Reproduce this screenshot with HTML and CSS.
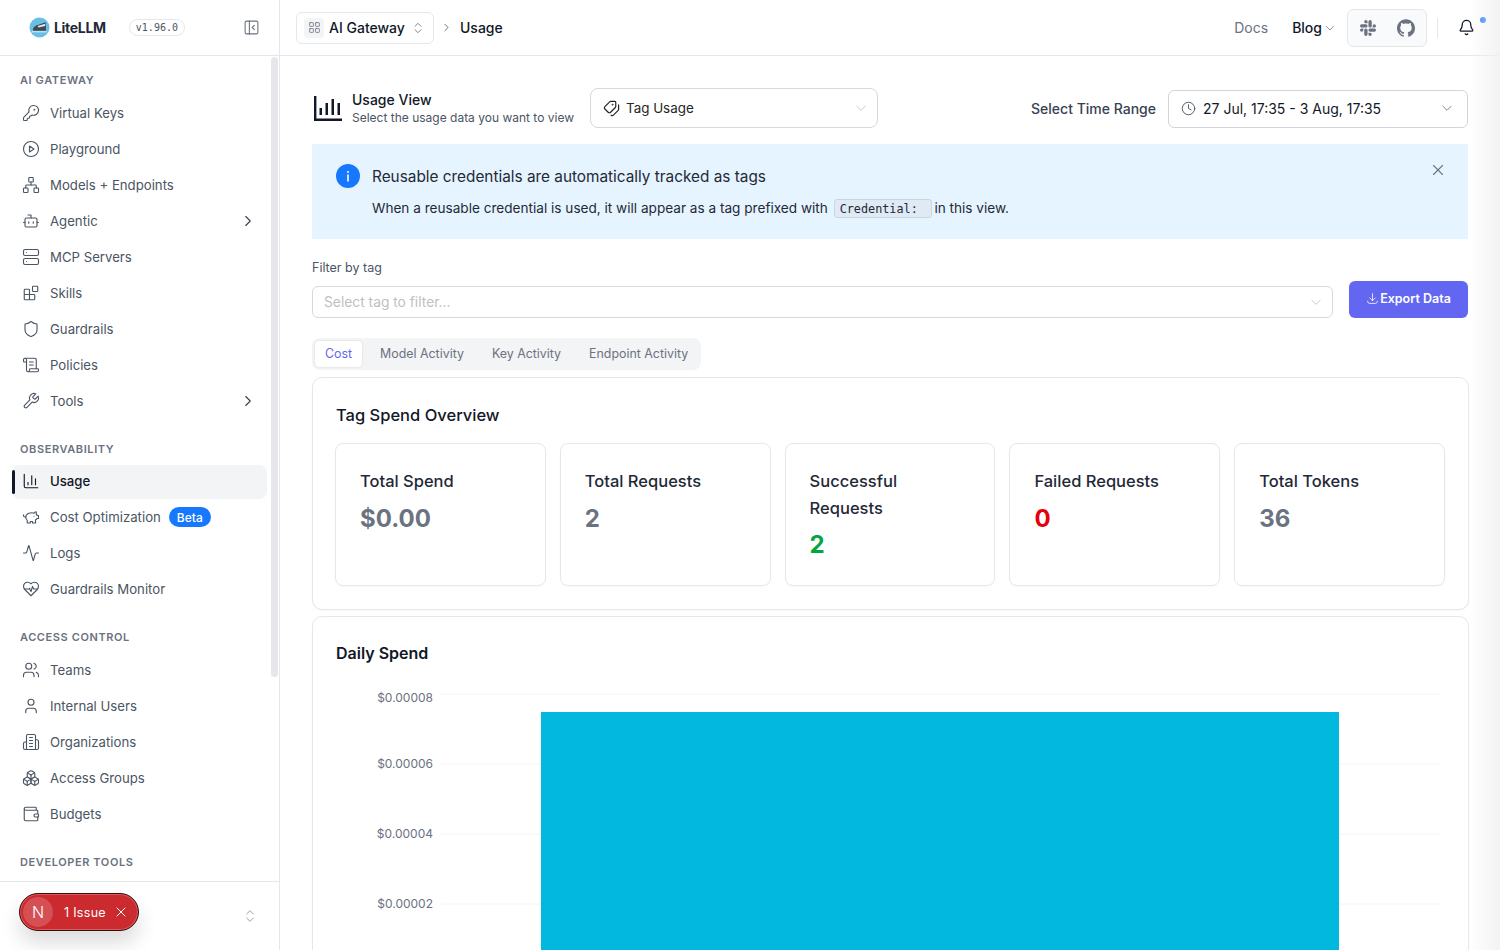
FILE: index.html
```html
<!DOCTYPE html>
<html lang="en">
<head>
  <meta charset="UTF-8" />
  <title>LiteLLM - Usage</title>
  <link rel="stylesheet" href="styles.css">
</head>
<body>
  <aside class="sidebar">
    <div class="brand">
      <svg class="brand-logo" viewBox="0 0 22 22">
        <circle cx="11" cy="11" r="10.5" fill="#68bfe6"/>
        <path d="M4 13c.5-2.5 3-4.5 6-5l7-2.5 .8 1.5v7.5H6c-1.2 0-2-.6-2-1.5z" fill="#3f4a55"/>
        <path d="M9 9.5l8-2.5v2.5l-7 1.5z" fill="#dfe8ee"/>
        <path d="M3 15.5h15.5" stroke="#e6eef2" stroke-width="1"/>
      </svg>
      <span class="brand-name">LiteLLM</span>
      <span class="version">v1.96.0</span>
      <svg class="icon collapse" viewBox="0 0 24 24"><rect x="3" y="3" width="18" height="18" rx="2"/><path d="M9 3v18"/><path d="m16 15-3-3 3-3"/></svg>
    </div>

    <nav class="nav">
      <div class="thumb"></div>
      <div class="nav-label">AI GATEWAY</div>
      <ul class="nav-list">
        <li class="nav-item"><svg class="icon" viewBox="0 0 24 24"><path d="M2.586 17.414A2 2 0 0 0 2 18.828V21a1 1 0 0 0 1 1h3a1 1 0 0 0 1-1v-1a1 1 0 0 1 1-1h1a1 1 0 0 0 1-1v-1a1 1 0 0 1 1-1h.172a2 2 0 0 0 1.414-.586l.814-.814a6.5 6.5 0 1 0-4-4z"/><circle cx="16.5" cy="7.5" r=".5"/></svg>Virtual Keys</li>
        <li class="nav-item"><svg class="icon" viewBox="0 0 24 24"><circle cx="12" cy="12" r="10"/><path d="M10 8l6 4-6 4z"/></svg>Playground</li>
        <li class="nav-item"><svg class="icon" viewBox="0 0 24 24"><rect x="16" y="16" width="6" height="6" rx="1"/><rect x="2" y="16" width="6" height="6" rx="1"/><rect x="9" y="2" width="6" height="6" rx="1"/><path d="M5 16v-3a1 1 0 0 1 1-1h12a1 1 0 0 1 1 1v3"/><path d="M12 12V8"/></svg>Models + Endpoints</li>
        <li class="nav-item"><svg class="icon" viewBox="0 0 24 24"><path d="M12 8V4H8"/><rect x="4" y="8" width="16" height="12" rx="2"/><path d="M2 14h2"/><path d="M20 14h2"/><path d="M15 13v2"/><path d="M9 13v2"/></svg>Agentic<svg class="icon arrow" viewBox="0 0 24 24"><path d="m9 18 6-6-6-6"/></svg></li>
        <li class="nav-item"><svg class="icon" viewBox="0 0 24 24"><rect x="2" y="2" width="20" height="8" rx="2"/><rect x="2" y="14" width="20" height="8" rx="2"/><path d="M6 6h.01"/><path d="M6 18h.01"/></svg>MCP Servers</li>
        <li class="nav-item"><svg class="icon" viewBox="0 0 24 24"><rect x="14" y="3" width="7" height="7" rx="1"/><path d="M10 21V8a1 1 0 0 0-1-1H4a1 1 0 0 0-1 1v12a1 1 0 0 0 1 1h12a1 1 0 0 0 1-1v-5a1 1 0 0 0-1-1H3"/></svg>Skills</li>
        <li class="nav-item"><svg class="icon" viewBox="0 0 24 24"><path d="M20 13c0 5-3.5 7.5-7.66 8.95a1 1 0 0 1-.67-.01C7.5 20.5 4 18 4 13V6a1 1 0 0 1 1-1c2 0 4.5-1.2 6.24-2.72a1.17 1.17 0 0 1 1.52 0C14.51 3.81 17 5 19 5a1 1 0 0 1 1 1z"/></svg>Guardrails</li>
        <li class="nav-item"><svg class="icon" viewBox="0 0 24 24"><path d="M15 12h-5"/><path d="M15 8h-5"/><path d="M19 17V5a2 2 0 0 0-2-2H4"/><path d="M8 21h12a2 2 0 0 0 2-2v-1a1 1 0 0 0-1-1H11a1 1 0 0 0-1 1v1a2 2 0 1 1-4 0V5a2 2 0 1 0-4 0v2a1 1 0 0 0 1 1h3"/></svg>Policies</li>
        <li class="nav-item"><svg class="icon" viewBox="0 0 24 24"><path d="M14.7 6.3a1 1 0 0 0 0 1.4l1.6 1.6a1 1 0 0 0 1.4 0l3.77-3.77a6 6 0 0 1-7.94 7.94l-6.91 6.91a2.12 2.12 0 0 1-3-3l6.91-6.91a6 6 0 0 1 7.94-7.94l-3.76 3.76z"/></svg>Tools<svg class="icon arrow" viewBox="0 0 24 24"><path d="m9 18 6-6-6-6"/></svg></li>
      </ul>

      <div class="nav-label">OBSERVABILITY</div>
      <ul class="nav-list">
        <li class="nav-item active"><svg class="icon" viewBox="0 0 24 24"><path d="M3 3v16a2 2 0 0 0 2 2h16"/><path d="M18 17V9"/><path d="M13 17V5"/><path d="M8 17v-3"/></svg>Usage</li>
        <li class="nav-item"><svg class="icon" viewBox="0 0 24 24"><path d="M19 5c-1.5 0-2.8 1.4-3 2-3.5-1.5-11-.3-11 5 0 1.8 0 3 2 4.5V20h4v-2h3v2h4v-4c1-.5 1.7-1 2-2h2v-4h-2c0-1-.5-1.5-1-2V5z"/><path d="M2 9v1c0 1.1.9 2 2 2h1"/><path d="M16 11h.01"/></svg>Cost Optimization<span class="beta">Beta</span></li>
        <li class="nav-item"><svg class="icon" viewBox="0 0 24 24"><path d="M22 12h-2.48a2 2 0 0 0-1.93 1.46l-2.35 8.36a.25.25 0 0 1-.48 0L9.24 2.18a.25.25 0 0 0-.48 0l-2.35 8.36A2 2 0 0 1 4.49 12H2"/></svg>Logs</li>
        <li class="nav-item"><svg class="icon" viewBox="0 0 24 24"><path d="M19 14c1.49-1.46 3-3.21 3-5.5A5.5 5.5 0 0 0 16.5 3c-1.76 0-3 .5-4.5 2-1.5-1.5-2.74-2-4.5-2A5.5 5.5 0 0 0 2 8.5c0 2.3 1.5 4.05 3 5.5l7 7Z"/><path d="M3.22 12H9.5l.5-1 2 4.5 2-7 1.5 3.5h5.27"/></svg>Guardrails Monitor</li>
      </ul>

      <div class="nav-label">ACCESS CONTROL</div>
      <ul class="nav-list">
        <li class="nav-item"><svg class="icon" viewBox="0 0 24 24"><path d="M16 21v-2a4 4 0 0 0-4-4H6a4 4 0 0 0-4 4v2"/><circle cx="9" cy="7" r="4"/><path d="M22 21v-2a4 4 0 0 0-3-3.87"/><path d="M16 3.13a4 4 0 0 1 0 7.75"/></svg>Teams</li>
        <li class="nav-item"><svg class="icon" viewBox="0 0 24 24"><path d="M19 21v-2a4 4 0 0 0-4-4H9a4 4 0 0 0-4 4v2"/><circle cx="12" cy="7" r="4"/></svg>Internal Users</li>
        <li class="nav-item"><svg class="icon" viewBox="0 0 24 24"><path d="M6 22V4a2 2 0 0 1 2-2h8a2 2 0 0 1 2 2v18Z"/><path d="M6 12H4a2 2 0 0 0-2 2v6a2 2 0 0 0 2 2h2"/><path d="M18 9h2a2 2 0 0 1 2 2v9a2 2 0 0 1-2 2h-2"/><path d="M10 6h4"/><path d="M10 10h4"/><path d="M10 14h4"/><path d="M10 18h4"/></svg>Organizations</li>
        <li class="nav-item"><svg class="icon" viewBox="0 0 24 24"><path d="M2.97 12.92A2 2 0 0 0 2 14.63v3.24a2 2 0 0 0 .97 1.71l3 1.8a2 2 0 0 0 2.06 0L12 19v-5.5l-5-3-4.03 2.42Z"/><path d="m7 16.5-4.74-2.85"/><path d="m7 16.5 5-3"/><path d="M7 16.5v5.17"/><path d="M12 13.5V19l3.97 2.38a2 2 0 0 0 2.06 0l3-1.8a2 2 0 0 0 .97-1.71v-3.24a2 2 0 0 0-.97-1.71L17 10.5l-5 3Z"/><path d="m17 16.5-5-3"/><path d="m17 16.5 4.74-2.85"/><path d="M17 16.5v5.17"/><path d="M7.97 4.42A2 2 0 0 0 7 6.13v4.37l5 3 5-3V6.13a2 2 0 0 0-.97-1.71l-3-1.8a2 2 0 0 0-2.06 0l-3 1.8Z"/><path d="M12 8 7.26 5.15"/><path d="m12 8 4.74-2.85"/><path d="M12 13.5V8"/></svg>Access Groups</li>
        <li class="nav-item"><svg class="icon" viewBox="0 0 24 24"><path d="M19 7V4a1 1 0 0 0-1-1H5a2 2 0 0 0 0 4h15a1 1 0 0 1 1 1v4h-3a2 2 0 0 0 0 4h3a1 1 0 0 0 1-1v-2a1 1 0 0 0-1-1"/><path d="M3 5v14a2 2 0 0 0 2 2h15a1 1 0 0 0 1-1v-4"/></svg>Budgets</li>
      </ul>

      <div class="nav-label">DEVELOPER TOOLS</div>
    </nav>

    <div class="side-foot">
      <div class="issue-toast">
        <span class="issue-n">N</span>
        <span class="issue-text">1 Issue</span>
        <svg class="icon issue-x" viewBox="0 0 24 24"><path d="M18 6 6 18"/><path d="m6 6 12 12"/></svg>
      </div>
      <svg class="icon updown" viewBox="0 0 24 24"><path d="m7 15 5 5 5-5"/><path d="m7 9 5-5 5 5"/></svg>
    </div>
  </aside>

  <div class="page">
    <header class="topbar">
      <div class="gateway">
        <span class="gateway-icon"><svg class="icon" viewBox="0 0 24 24"><rect x="3" y="3" width="7" height="7" rx="1"/><rect x="14" y="3" width="7" height="7" rx="1"/><rect x="14" y="14" width="7" height="7" rx="1"/><rect x="3" y="14" width="7" height="7" rx="1"/></svg></span>
        AI Gateway
        <svg class="icon updown" viewBox="0 0 24 24"><path d="m7 15 5 5 5-5"/><path d="m7 9 5-5 5 5"/></svg>
      </div>
      <svg class="icon crumb-sep" viewBox="0 0 24 24"><path d="m9 18 6-6-6-6"/></svg>
      <span class="crumb">Usage</span>
      <div class="top-right">
        <span class="top-link">Docs</span>
        <span class="top-link blog">Blog<svg class="icon" viewBox="0 0 24 24"><path d="m5 9 7 7 7-7"/></svg></span>
        <div class="social">
          <svg class="slack" viewBox="0 0 24 24"><path d="M5.042 15.165a2.528 2.528 0 0 1-2.52 2.523A2.528 2.528 0 0 1 0 15.165a2.527 2.527 0 0 1 2.522-2.52h2.52v2.52zM6.313 15.165a2.527 2.527 0 0 1 2.521-2.52 2.527 2.527 0 0 1 2.521 2.52v6.313A2.528 2.528 0 0 1 8.834 24a2.528 2.528 0 0 1-2.521-2.522v-6.313zM8.834 5.042a2.528 2.528 0 0 1-2.521-2.52A2.528 2.528 0 0 1 8.834 0a2.528 2.528 0 0 1 2.521 2.522v2.52H8.834zM8.834 6.313a2.528 2.528 0 0 1 2.521 2.521 2.528 2.528 0 0 1-2.521 2.521H2.522A2.528 2.528 0 0 1 0 8.834a2.528 2.528 0 0 1 2.522-2.521h6.312zM18.956 8.834a2.528 2.528 0 0 1 2.522-2.521A2.528 2.528 0 0 1 24 8.834a2.528 2.528 0 0 1-2.522 2.521h-2.522V8.834zM17.688 8.834a2.528 2.528 0 0 1-2.523 2.521 2.527 2.527 0 0 1-2.52-2.521V2.522A2.527 2.527 0 0 1 15.165 0a2.528 2.528 0 0 1 2.523 2.522v6.312zM15.165 18.956a2.528 2.528 0 0 1 2.523 2.522A2.528 2.528 0 0 1 15.165 24a2.527 2.527 0 0 1-2.52-2.522v-2.522h2.52zM15.165 17.688a2.527 2.527 0 0 1-2.52-2.523 2.526 2.526 0 0 1 2.52-2.52h6.313A2.527 2.527 0 0 1 24 15.165a2.528 2.528 0 0 1-2.522 2.523h-6.313z"/></svg>
          <svg class="github" viewBox="0 0 24 24"><path d="M12 .297c-6.63 0-12 5.373-12 12 0 5.303 3.438 9.8 8.205 11.385.6.113.82-.258.82-.577 0-.285-.01-1.04-.015-2.04-3.338.724-4.042-1.61-4.042-1.61C4.422 18.07 3.633 17.7 3.633 17.7c-1.087-.744.084-.729.084-.729 1.205.084 1.838 1.236 1.838 1.236 1.07 1.835 2.809 1.305 3.495.998.108-.776.417-1.305.76-1.605-2.665-.3-5.466-1.332-5.466-5.93 0-1.31.465-2.38 1.235-3.22-.135-.303-.54-1.523.105-3.176 0 0 1.005-.322 3.3 1.23.96-.267 1.98-.399 3-.405 1.02.006 2.04.138 3 .405 2.28-1.552 3.285-1.23 3.285-1.23.645 1.653.24 2.873.12 3.176.765.84 1.23 1.91 1.23 3.22 0 4.61-2.805 5.625-5.475 5.92.42.36.81 1.096.81 2.22 0 1.606-.015 2.896-.015 3.286 0 .315.21.69.825.57C20.565 22.092 24 17.592 24 12.297c0-6.627-5.373-12-12-12"/></svg>
        </div>
        <span class="top-divider"></span>
        <span class="bell">
          <svg class="icon" viewBox="0 0 24 24"><path d="M10.268 21a2 2 0 0 0 3.464 0"/><path d="M3.262 15.326A1 1 0 0 0 4 17h16a1 1 0 0 0 .74-1.673C19.41 13.956 18 12.499 18 8A6 6 0 0 0 6 8c0 4.499-1.411 5.956-2.738 7.326"/></svg>
          <span class="bell-dot"></span>
        </span>
      </div>
    </header>

    <main class="content">
      <div class="view-row">
        <svg class="view-icon" viewBox="0 0 28 25"><path d="M1.2 0v23.8H28" fill="none" stroke="#111827" stroke-width="2.4"/><path d="M5.5 19H8v-7H5.5zM11.5 19H14V7h-2.5zM17.5 19H20V3h-2.5zM23.5 19H26V7h-2.5z" fill="#111827"/></svg>
        <div class="view-text">
          <div class="view-title">Usage View</div>
          <div class="view-sub">Select the usage data you want to view</div>
        </div>
        <div class="view-select">
          <svg class="icon tags" viewBox="0 0 24 24"><path d="M13.172 2a2 2 0 0 1 1.414.586l6.71 6.71a2.4 2.4 0 0 1 0 3.408l-4.592 4.592a2.4 2.4 0 0 1-3.408 0l-6.71-6.71A2 2 0 0 1 6 9.172V3a1 1 0 0 1 1-1z"/><path d="M2 7v6.172a2 2 0 0 0 .586 1.414l6.71 6.71a2.4 2.4 0 0 0 3.18.188"/><circle cx="10.5" cy="6.5" r=".5"/></svg>
          Tag Usage
          <svg class="icon chev" viewBox="0 0 24 24"><path d="m5 9 7 7 7-7"/></svg>
        </div>
        <div class="range">
          <span class="range-label">Select Time Range</span>
          <div class="range-picker">
            <svg class="icon" viewBox="0 0 24 24"><circle cx="12" cy="12" r="10"/><path d="M12 6v6l4 2"/></svg>
            27 Jul, 17:35 - 3 Aug, 17:35
            <svg class="icon chev" viewBox="0 0 24 24"><path d="m5 9 7 7 7-7"/></svg>
          </div>
        </div>
      </div>

      <div class="alert">
        <svg class="alert-icon" viewBox="0 0 24 24"><circle cx="12" cy="12" r="12" fill="#1677ff"/><rect x="11.2" y="10.5" width="1.6" height="7" fill="#fff"/><rect x="11.2" y="7" width="1.6" height="1.8" fill="#fff"/></svg>
        <div class="alert-body">
          <div class="alert-title">Reusable credentials are automatically tracked as tags</div>
          <div class="alert-text">When a reusable credential is used, it will appear as a tag prefixed with <code>Credential:</code> in this view.</div>
        </div>
        <svg class="icon alert-close" viewBox="0 0 24 24"><path d="M18 6 6 18"/><path d="m6 6 12 12"/></svg>
      </div>

      <div class="filter">
        <div class="filter-main">
          <div class="filter-label">Filter by tag</div>
          <div class="filter-select">Select tag to filter...<svg class="icon chev" viewBox="0 0 24 24"><path d="m5 9 7 7 7-7"/></svg></div>
        </div>
        <button class="export"><svg class="icon" viewBox="0 0 24 24"><path d="M12 3v13"/><path d="m7 11 5 5 5-5"/><path d="M3 17c0 2.5 1.5 4 4 4h10c2.5 0 4-1.5 4-4"/></svg>Export Data</button>
      </div>

      <div class="tabs">
        <span class="tab current">Cost</span>
        <span class="tab">Model Activity</span>
        <span class="tab">Key Activity</span>
        <span class="tab">Endpoint Activity</span>
      </div>

      <section class="card overview">
        <h2 class="card-title">Tag Spend Overview</h2>
        <div class="stats">
          <div class="stat"><div class="stat-label">Total Spend</div><div class="stat-value">$0.00</div></div>
          <div class="stat"><div class="stat-label">Total Requests</div><div class="stat-value">2</div></div>
          <div class="stat"><div class="stat-label">Successful Requests</div><div class="stat-value good">2</div></div>
          <div class="stat"><div class="stat-label">Failed Requests</div><div class="stat-value bad">0</div></div>
          <div class="stat"><div class="stat-label">Total Tokens</div><div class="stat-value">36</div></div>
        </div>
      </section>

      <section class="card daily">
        <h2 class="card-title strong">Daily Spend</h2>
        <svg class="chart" viewBox="0 0 1108 320">
          <g class="grid">
            <path d="M105 18H1104"/><path d="M105 88H1104"/><path d="M105 158H1104"/><path d="M105 228H1104"/>
          </g>
          <g class="ticks">
            <text x="97" y="26">$0.00008</text>
            <text x="97" y="92">$0.00006</text>
            <text x="97" y="162">$0.00004</text>
            <text x="97" y="232">$0.00002</text>
          </g>
          <rect x="205" y="36" width="798" height="284" fill="#02b8de"/>
        </svg>
      </section>
    </main>
  </div>

  <div class="edge-fade"></div>
</body>
</html>
```

FILE: styles.css
```css
* {
  box-sizing: border-box;
  margin: 0;
  padding: 0;
}

html, body {
  height: 100%;
}

body {
  display: flex;
  overflow: hidden;
  font-family: Inter, "Noto Sans", sans-serif;
  font-size: 14px;
  color: #111827;
  background: #fff;
}

.icon {
  width: 18px;
  height: 18px;
  flex: none;
  fill: none;
  stroke: currentColor;
  stroke-width: 1.5;
  stroke-linecap: round;
  stroke-linejoin: round;
}

/* sidebar */
.sidebar {
  width: 280px;
  flex: none;
  height: 100%;
  display: flex;
  flex-direction: column;
  border-right: 1px solid #e5e7eb;
}

.brand {
  height: 56px;
  flex: none;
  display: flex;
  align-items: center;
  padding-left: 29px;
  border-bottom: 1px solid #e5e7eb;
}

.brand-logo {
  width: 21px;
  height: 21px;
  flex: none;
}

.brand-name {
  margin-left: 4px;
  font-size: 14px;
  font-weight: 700;
  letter-spacing: -0.3px;
  color: #1f2937;
}

.version {
  margin-left: 23px;
  height: 17px;
  padding: 0 6px;
  display: flex;
  align-items: center;
  border: 1px solid #e5e7eb;
  border-radius: 9px;
  font-family: "DejaVu Sans Mono", monospace;
  font-size: 10px;
  color: #4b5563;
}

.collapse {
  margin-left: 58px;
  width: 17px;
  height: 17px;
  color: #6b7280;
}

.nav {
  position: relative;
  flex: 1;
  min-height: 0;
  overflow: hidden;
  padding: 16px 12px 0;
}

.thumb {
  position: absolute;
  top: 1px;
  right: 1px;
  width: 7px;
  height: 620px;
  border-radius: 4px;
  background: #e5e7eb;
}

.nav-label {
  height: 16px;
  padding-left: 8px;
  margin-bottom: 7.5px;
  font-size: 11px;
  line-height: 16px;
  font-weight: 600;
  letter-spacing: 0.6px;
  color: #6b7280;
}

.nav-list {
  list-style: none;
  display: flex;
  flex-direction: column;
  gap: 2px;
  margin-bottom: 23px;
  width: 255px;
}

.nav-item {
  height: 34px;
  display: flex;
  align-items: center;
  gap: 10px;
  padding-left: 10px;
  padding-right: 10px;
  border-radius: 8px;
  font-size: 13.2px;
  color: #4b5563;
}

.nav-item .arrow {
  margin-left: auto;
  color: #374151;
}

.nav-item.active {
  position: relative;
  margin-top: 1px;
  margin-bottom: -1px;
  padding-bottom: 2px;
  background: #f3f4f6;
  color: #111827;
  font-weight: 500;
}

.nav-item.active::before {
  content: "";
  position: absolute;
  left: 0;
  top: 5px;
  bottom: 5px;
  width: 3px;
  border-radius: 2px;
  background: #111827;
}

.beta {
  margin-left: -2px;
  height: 20px;
  padding: 0 8px;
  display: flex;
  align-items: center;
  border-radius: 10px;
  background: #1677ff;
  color: #fff;
  font-size: 12px;
  font-weight: 500;
}

.side-foot {
  position: relative;
  height: 69px;
  flex: none;
  display: flex;
  align-items: center;
  justify-content: flex-end;
  padding-right: 21px;
  border-top: 1px solid #e5e7eb;
}

.side-foot .updown {
  width: 16px;
  height: 16px;
  color: #9ca3af;
}

.issue-toast {
  position: absolute;
  left: 19px;
  top: 11px;
  width: 120px;
  height: 38px;
  display: flex;
  align-items: center;
  padding-left: 3px;
  border-radius: 19px;
  background: #cb2a2f;
  border: 1px solid #2b1214;
  box-shadow: inset 0 0 0 1px #e4565a, 0 12px 20px rgba(0, 0, 0, 0.14);
  color: #fff;
}

.issue-n {
  width: 30px;
  height: 30px;
  display: flex;
  align-items: center;
  justify-content: center;
  border-radius: 50%;
  background: rgba(255, 255, 255, 0.18);
  font-size: 16px;
  font-weight: 300;
}

.issue-text {
  margin-left: 11px;
  font-size: 12.5px;
  font-weight: 400;
  letter-spacing: 0.3px;
}

.issue-x {
  width: 16px;
  height: 16px;
  margin-left: 7px;
}

/* top bar */
.page {
  flex: 1;
  min-width: 0;
  height: 100%;
  display: flex;
  flex-direction: column;
}

.topbar {
  height: 56px;
  flex: none;
  display: flex;
  align-items: center;
  padding-left: 16px;
  border-bottom: 1px solid #e5e7eb;
}

.gateway {
  width: 138px;
  height: 32px;
  display: flex;
  align-items: center;
  padding-left: 7px;
  border: 1px solid #e5e7eb;
  border-radius: 6px;
  font-size: 14px;
  font-weight: 500;
  white-space: nowrap;
}

.gateway-icon {
  width: 20px;
  height: 20px;
  margin-right: 5px;
  display: flex;
  align-items: center;
  justify-content: center;
  border-radius: 4px;
  background: #f3f4f6;
  color: #6b7280;
}

.gateway-icon .icon {
  width: 13px;
  height: 13px;
}

.gateway .updown {
  width: 14px;
  height: 14px;
  margin-left: 6px;
  color: #6b7280;
}

.crumb-sep {
  width: 13px;
  height: 13px;
  margin: 0 7px 0 6px;
  color: #4b5563;
}

.crumb {
  font-size: 14px;
  font-weight: 500;
}

.top-right {
  margin-left: auto;
  display: flex;
  align-items: center;
  padding-right: 25px;
}

.top-link {
  font-size: 14px;
  color: #6b7280;
}

.blog {
  margin-left: 24px;
  display: flex;
  align-items: center;
  color: #111827;
  font-weight: 500;
}

.blog .icon {
  width: 12px;
  height: 12px;
  margin-left: 2px;
  color: #6b7280;
}

.social {
  width: 80px;
  height: 38px;
  margin-left: 11px;
  display: flex;
  align-items: center;
  gap: 21px;
  padding-left: 12px;
  border: 1px solid #e5e7eb;
  border-radius: 6px;
  background: #f9fafb;
  fill: #6b7280;
}

.slack {
  width: 16px;
  height: 16px;
}

.github {
  width: 18px;
  height: 18px;
}

.top-divider {
  width: 1px;
  height: 20px;
  margin: 0 20px 0 10px;
  background: #e5e7eb;
}

.bell {
  position: relative;
  display: flex;
  color: #111827;
}

.bell .icon {
  width: 17px;
  height: 17px;
  stroke-width: 1.8;
}

.bell-dot {
  position: absolute;
  top: -2px;
  right: -11px;
  width: 6px;
  height: 6px;
  border-radius: 50%;
  background: #1677ff;
}

/* page content */
.content {
  flex: 1;
  min-height: 0;
  overflow: hidden;
  padding: 32px 32px 0;
}

.view-row {
  height: 40px;
  display: flex;
  align-items: center;
  margin-bottom: 16px;
}

.view-icon {
  width: 28px;
  height: 25px;
  margin-left: 2px;
  flex: none;
}

.view-text {
  margin-left: 10px;
  width: 238px;
  flex: none;
  padding-bottom: 2px;
}

.view-title {
  font-size: 14px;
  line-height: 20px;
  font-weight: 500;
}

.view-sub {
  font-size: 12px;
  line-height: 15px;
  color: #4b5563;
  white-space: nowrap;
}

.view-select {
  width: 288px;
  height: 40px;
  display: flex;
  align-items: center;
  gap: 6px;
  padding: 0 9px 0 12px;
  border: 1px solid #d9d9d9;
  border-radius: 8px;
  font-size: 13.4px;
  color: #262626;
}

.tags {
  width: 17px;
  height: 17px;
  stroke-width: 1.7;
  transform: scaleX(-1);
}

.chev {
  margin-left: auto;
  width: 14px;
  height: 14px;
  color: #bfbfbf;
}

.range {
  margin-left: auto;
  display: flex;
  align-items: center;
  gap: 12px;
  align-self: flex-end;
}

.range-label {
  padding-bottom: 2px;
  color: #374151;
  font-weight: 500;
}

.range-picker {
  width: 300px;
  height: 38px;
  display: flex;
  align-items: center;
  gap: 7px;
  padding: 0 13px 2px 12px;
  border: 1px solid #d1d5db;
  border-radius: 6px;
  color: #111827;
}

.range-picker > .icon:first-child {
  width: 15px;
  height: 15px;
  color: #4b5563;
}

.range-picker .chev {
  color: #6b7280;
}

.alert {
  height: 95px;
  display: flex;
  gap: 12px;
  padding: 20px 24px;
  background: #e6f4ff;
}

.alert-icon {
  width: 24px;
  height: 24px;
  flex: none;
}

.alert-body {
  flex: 1;
}

.alert-title {
  padding-top: 1px;
  font-size: 15.35px;
  line-height: 24px;
  color: #1f2937;
}

.alert-text {
  margin-top: 9px;
  font-size: 13.6px;
  line-height: 20px;
  color: #1f2937;
}

.alert-text code {
  display: inline-block;
  width: 98px;
  height: 19px;
  padding-left: 5px;
  margin: 0 -1px 0 2px;
  border: 1px solid #cbd5e1;
  border-radius: 3px;
  background: #dfeaf4;
  font-family: "DejaVu Sans Mono", monospace;
  font-size: 11.8px;
  line-height: 18px;
}

.alert-close {
  margin-top: -3px;
  margin-right: -3px;
  color: #6b7280;
}

.filter {
  margin-top: 21px;
  display: flex;
  align-items: flex-end;
  gap: 16px;
}

.filter-main {
  flex: 1;
}

.filter-label {
  font-size: 12.5px;
  line-height: 16px;
  margin-bottom: 10px;
  color: #4b5563;
}

.filter-select {
  height: 32px;
  display: flex;
  align-items: center;
  padding: 0 9px 0 11px;
  border: 1px solid #d9d9d9;
  border-radius: 6px;
  font-size: 13.8px;
  color: #bfbfbf;
}

.export {
  width: 119px;
  height: 37px;
  display: flex;
  align-items: center;
  justify-content: center;
  gap: 1px;
  padding-bottom: 2px;
  border: none;
  border-radius: 6px;
  background: #6366f1;
  color: #fff;
  font-family: inherit;
  font-size: 12.5px;
  font-weight: 600;
}

.export .icon {
  width: 13px;
  height: 13px;
}

.tabs {
  width: 389px;
  height: 32px;
  margin-top: 20px;
  display: flex;
  align-items: center;
  padding: 0 3px 2px;
  border-radius: 8px;
  background: #f3f4f6;
}

.tab {
  padding: 0 14px;
  font-size: 12.4px;
  color: #6b7280;
  white-space: nowrap;
}

.tab.current {
  height: 26px;
  padding: 0 10px;
  margin-top: 2px;
  margin-right: 4px;
  padding-bottom: 2px;
  display: flex;
  align-items: center;
  border-radius: 4px;
  background: #fff;
  box-shadow: 0 0 2px rgba(0, 0, 0, 0.15);
  color: #6366f1;
}

.card {
  margin-right: -0.5px;
  border: 1px solid #e5e7eb;
  border-radius: 10px;
  padding: 23px;
  background: #fff;
  box-shadow: 0 1px 2px rgba(0, 0, 0, 0.03);
}

.overview {
  margin-top: 7px;
  height: 233px;
}

.daily {
  margin-top: 6px;
  padding-bottom: 0;
}

.card-title {
  font-size: 16.5px;
  line-height: 28px;
  font-weight: 500;
}

.card-title.strong {
  font-size: 16px;
  line-height: 26px;
  font-weight: 600;
}

.stats {
  margin: 14px -0.5px 0 -1px;
  display: grid;
  grid-template-columns: repeat(5, 1fr);
  gap: 14px;
}

.stat {
  height: 143px;
  padding: 24px;
  border: 1px solid #e5e7eb;
  border-radius: 8px;
  box-shadow: 0 1px 2px rgba(0, 0, 0, 0.03);
}

.stat-label {
  font-size: 16.5px;
  line-height: 26.5px;
  font-weight: 500;
  color: #1f2937;
}

.stat-value {
  margin-top: 8px;
  font-size: 24px;
  line-height: 32px;
  font-weight: 700;
  color: #6b7280;
}

.stat-value.good {
  color: #00a63e;
}

.stat-value.bad {
  color: #e7000b;
}

.chart {
  display: block;
  width: 1108px;
  height: 320px;
  margin-top: 10px;
}

.grid path {
  stroke: #f3f4f6;
  stroke-width: 1;
}

.ticks text {
  font-size: 12px;
  fill: #6b7280;
  text-anchor: end;
}

.edge-fade {
  position: fixed;
  top: 0;
  right: 0;
  bottom: 0;
  width: 30px;
  background: linear-gradient(to right, rgba(240, 240, 240, 0), rgba(240, 240, 240, 0.85));
  pointer-events: none;
}
```
